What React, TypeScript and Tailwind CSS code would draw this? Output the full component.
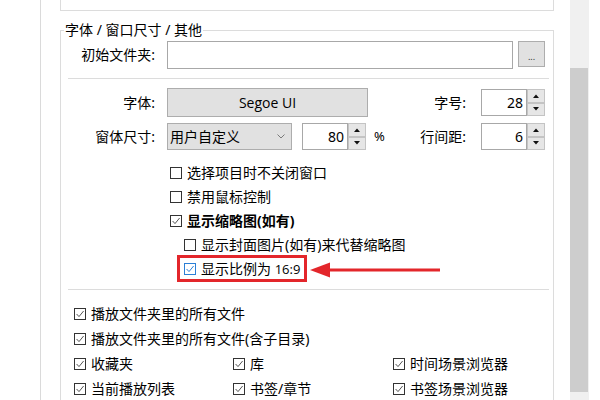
import React from 'react';

function Box({ checked, blue }: { checked?: boolean; blue?: boolean }) {
  return (
    <span
      className={[
        'flex h-[12px] w-[12px] shrink-0 items-center justify-center border bg-white',
        blue ? 'border-[#2b7fd6]' : 'border-[#333333]',
      ].join(' ')}
    >
      {checked && (
        <svg width="10" height="10" viewBox="0 0 10 10">
          <path d="M1.6 5 L4 7.6 L8.6 2" fill="none" stroke={blue ? '#2b7fd6' : '#555555'} strokeWidth="1" />
        </svg>
      )}
    </span>
  );
}

function Check({ label, checked, bold, blue, h = 'h-[24px]' }: { label: React.ReactNode; checked?: boolean; bold?: boolean; blue?: boolean; h?: string }) {
  return (
    <div className={['flex items-center gap-[5px]', h].join(' ')}>
      <Box checked={checked} blue={blue} />
      <span className={['leading-[20px] whitespace-nowrap', bold ? 'font-bold' : ''].join(' ')}>{label}</span>
    </div>
  );
}

function Spin({ value }: { value: string }) {
  return (
    <div className="flex h-[27px]">
      <div className="flex h-[27px] w-[46px] items-center justify-end border border-[#a8a8a8] bg-white pr-[3px] leading-none">
        {value}
      </div>
      <div className="flex w-[18px] flex-col">
        {[0, 1].map(i => (
          <div key={i} className="flex h-[13.5px] items-center justify-center border border-[#c4c4c4] bg-[#e6e6e6]">
            <svg width="6" height="4" viewBox="0 0 6 4">
              <path d={i === 0 ? 'M0 4 L3 0.5 L6 4 Z' : 'M0 0 L3 3.5 L6 0 Z'} fill="#111111" />
            </svg>
          </div>
        ))}
      </div>
    </div>
  );
}

export default function App() {
  return (
    <div className="flex h-[400px] w-[600px] overflow-hidden bg-white font-['Noto_Sans','Noto_Sans_CJK_SC',sans-serif] text-[14px] text-black">
      {/* left panel edge */}
      <div className="w-[41px] shrink-0 border-r border-[#dadada]" />

      {/* settings page */}
      <div className="w-[513px] shrink-0 pl-[19px]">
        <div className="h-[11px] w-[494px] border-x border-b border-[#dcdcdc]" />

        <div className="relative mt-[19px] h-[400px] w-[494px] border border-[#dcdcdc]">
          <span className="absolute left-[3px] top-[-11px] bg-white px-px leading-[20px]">字体 / 窗口尺寸 / 其他</span>

          {/* folder */}
          <div className="mt-[10px] flex items-start">
            <div className="h-[28px] w-[94px] text-right leading-[28px]">初始文件夹:</div>
            <div className="ml-[12px] h-[28px] w-[346px] border border-[#a8a8a8] bg-white" />
            <div className="ml-[5px] flex h-[26px] w-[27px] items-end justify-center border border-[#adadad] bg-[#e1e1e1] pb-[5px] text-[9px] leading-none text-[#333333]">
              ...
            </div>
          </div>

          <div className="ml-[7px] mt-[9px] h-px w-[481px] bg-[#dcdcdc]" />

          {/* font */}
          <div className="mt-[9px] flex h-[29px] items-center pr-[8px]">
            <div className="w-[94px] text-right">字体:</div>
            <div className="ml-[12px] flex h-[29px] w-[201px] items-center justify-center border border-[#adadad] bg-[#e1e1e1] font-['Open_Sans',sans-serif]">
              Segoe UI
            </div>
            <div className="ml-auto flex items-center">
              <span>字号:</span>
              <div className="ml-[15px]"><Spin value="28" /></div>
            </div>
          </div>

          {/* window size */}
          <div className="mt-[6px] flex h-[27px] items-center pr-[8px]">
            <div className="w-[94px] text-right">窗体尺寸:</div>
            <div className="ml-[12px] flex h-[27px] w-[125px] items-center justify-between border border-[#adadad] bg-[#e1e1e1] pl-[2px] pr-[6px]">
              <span>用户自定义</span>
              <svg width="8" height="5" viewBox="0 0 8 5">
                <path d="M0.5 0.5 L4 4 L7.5 0.5" fill="none" stroke="#7a7a7a" strokeWidth="1" />
              </svg>
            </div>
            <div className="ml-[10px]"><Spin value="80" /></div>
            <span className="ml-[8px] text-[13px]">%</span>
            <div className="ml-auto flex items-center">
              <span>行间距:</span>
              <div className="ml-[15px]"><Spin value="6" /></div>
            </div>
          </div>

          {/* display options */}
          <div className="mt-[11px] pl-[109px]">
            <Check label="选择项目时不关闭窗口" />
            <Check label="禁用鼠标控制" />
            <Check label="显示缩略图(如有)" checked bold />
            <div className="pl-[14px]">
              <Check label="显示封面图片(如有)来代替缩略图" />
              <div className="relative">
                <Check label={<>显示比例为 <span className="font-['Open_Sans',sans-serif] text-[13px]">16:9</span></>} checked blue />
                <span className="absolute left-[-7px] top-[-2px] h-[27px] w-[130px] border-[3px] border-[#e3262b]" />
                <svg className="absolute left-[124px] top-[4px]" width="132" height="18" viewBox="0 0 132 18">
                  <rect x="18" y="7.5" width="114" height="3" fill="#e3262b" />
                  <path d="M2 9 L22 1.5 L22 16.5 Z" fill="#e3262b" />
                </svg>
              </div>
            </div>
          </div>

          <div className="ml-[7px] mt-[8px] h-px w-[481px] bg-[#dcdcdc]" />

          {/* playback options */}
          <div className="mt-[11px] grid grid-cols-[159px_160px_1fr] pl-[13px]">
            <div className="col-span-3"><Check label="播放文件夹里的所有文件" checked h="h-[25px]" /></div>
            <div className="col-span-3"><Check label="播放文件夹里的所有文件(含子目录)" checked h="h-[25px]" /></div>
            <Check label="收藏夹" checked h="h-[25px]" />
            <Check label="库" checked h="h-[25px]" />
            <Check label="时间场景浏览器" checked h="h-[25px]" />
            <Check label="当前播放列表" checked h="h-[25px]" />
            <Check label="书签/章节" checked h="h-[25px]" />
            <Check label="书签场景浏览器" checked h="h-[25px]" />
          </div>
        </div>
      </div>

      <div className="w-[16px] shrink-0" />

      {/* scrollbar */}
      <div className="w-[19px] shrink-0 bg-[#f0f0f0] pt-[68px]">
        <div className="h-[324px] w-[18px] bg-[#cdcdcd]" />
      </div>
    </div>
  );
}
